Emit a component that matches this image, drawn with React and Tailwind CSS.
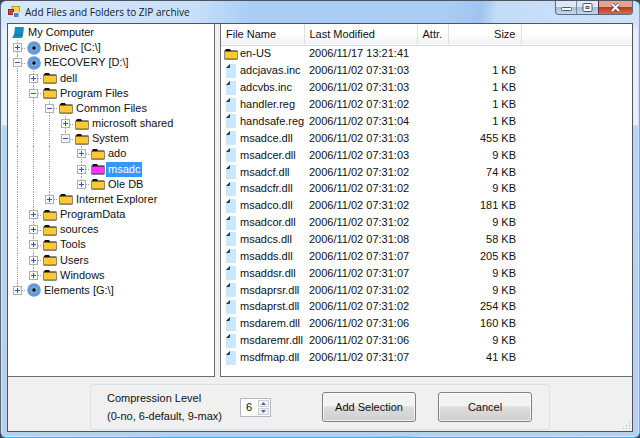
import { useState } from "react";

const tree = [
  {
    name: "My Computer",
    icon: "computer",
    children: [
      { name: "DriveC [C:\\]", icon: "drive" },
      {
        name: "RECOVERY [D:\\]",
        icon: "drive",
        children: [
          { name: "dell" },
          {
            name: "Program Files",
            children: [
              {
                name: "Common Files",
                children: [
                  { name: "microsoft shared" },
                  {
                    name: "System",
                    children: [{ name: "ado" }, { name: "msadc" }, { name: "Ole DB" }],
                  },
                ],
              },
              { name: "Internet Explorer" },
            ],
          },
          { name: "ProgramData" },
          { name: "sources" },
          { name: "Tools" },
          { name: "Users" },
          { name: "Windows" },
        ],
      },
      { name: "Elements [G:\\]", icon: "drive" },
    ],
  },
];

const files = [
  ["en-US", "2006/11/17 13:21:41", ""],
  ["adcjavas.inc", "2006/11/02 07:31:03", "1 KB"],
  ["adcvbs.inc", "2006/11/02 07:31:03", "1 KB"],
  ["handler.reg", "2006/11/02 07:31:02", "1 KB"],
  ["handsafe.reg", "2006/11/02 07:31:04", "1 KB"],
  ["msadce.dll", "2006/11/02 07:31:03", "455 KB"],
  ["msadcer.dll", "2006/11/02 07:31:03", "9 KB"],
  ["msadcf.dll", "2006/11/02 07:31:02", "74 KB"],
  ["msadcfr.dll", "2006/11/02 07:31:02", "9 KB"],
  ["msadco.dll", "2006/11/02 07:31:02", "181 KB"],
  ["msadcor.dll", "2006/11/02 07:31:02", "9 KB"],
  ["msadcs.dll", "2006/11/02 07:31:08", "58 KB"],
  ["msadds.dll", "2006/11/02 07:31:07", "205 KB"],
  ["msaddsr.dll", "2006/11/02 07:31:07", "9 KB"],
  ["msdaprsr.dll", "2006/11/02 07:31:02", "9 KB"],
  ["msdaprst.dll", "2006/11/02 07:31:02", "254 KB"],
  ["msdarem.dll", "2006/11/02 07:31:06", "160 KB"],
  ["msdaremr.dll", "2006/11/02 07:31:06", "9 KB"],
  ["msdfmap.dll", "2006/11/02 07:31:07", "41 KB"],
];

// one flat row per node; lines[i] says whether the guide in column i runs past the row
function flatten(nodes, lines = []) {
  return nodes.flatMap((node, i) => {
    const isRoot = node.icon === "computer";
    const own = isRoot ? [] : [...lines, i < nodes.length - 1];
    return [{ ...node, lines: own }, ...flatten(node.children ?? [], own)];
  });
}

const rows = flatten(tree);

function FolderIcon({ color = "#ffc933" }) {
  return (
    <svg viewBox="0 0 14 12" width="14" height="12" className="shrink-0">
      <path d="M1 2.5 2 1h4l1 1.5h6.5V11.5H.5V2.5z" fill="#111" />
      <rect x="1" y="3.5" width="12" height="7.2" fill={color} />
    </svg>
  );
}

function FileIcon() {
  return (
    <svg viewBox="0 0 14 14" width="14" height="14" className="shrink-0">
      <path d="M6 0h6v14H2V4z" fill="#c9e8fd" />
      <path d="M6 0v4H2z" fill="#10283c" />
      <path d="M6 2v2H4z" fill="#1c78b8" />
    </svg>
  );
}

function NodeIcon({ type, selected }) {
  if (type === "computer") {
    return (
      <svg viewBox="0 0 12 12" width="12" height="12">
        <path d="M3 0h8.500l-1 8H2z" fill="#0f8fc4" />
        <path d="M11.500 0 10.500 8H11l.8-7z" fill="#0b3d57" />
        <path d="M1.500 8.500h9.500L10 11H0z" fill="#1497a8" />
        <path d="M1.500 8.300h9.500" stroke="#0a3f55" strokeWidth=".8" />
      </svg>
    );
  }
  if (type === "drive") {
    return (
      <svg viewBox="0 0 14 14" width="14" height="14">
        <circle cx="7" cy="7" r="6.800" fill="#659bd2" />
        <circle cx="7" cy="7" r="3.200" fill="#78aade" />
        <circle cx="7" cy="7" r="1.700" fill="#05080c" />
      </svg>
    );
  }
  return <FolderIcon color={selected ? "#ff33ff" : undefined} />;
}

function TreeRow({ node, selected, onSelect }) {
  const last = node.lines.length - 1;
  return (
    <li className="flex items-center pl-px">
      {node.lines.map((continues, i) => (
        <span key={i} className="relative flex h-full w-4 shrink-0 items-center justify-center">
          {(continues || i === last) && (
            <span
              className={`absolute left-2 top-0 border-l border-dotted border-[#a0a0a0] ${
                continues ? "bottom-0" : "bottom-1/2"
              }`}
            />
          )}
          {i === last && (
            <>
              <span className="absolute left-2 right-0 top-1/2 border-t border-dotted border-[#a0a0a0]" />
              <button
                aria-label={node.children ? `Collapse ${node.name}` : `Expand ${node.name}`}
                className="relative ml-px flex size-[7px] items-center justify-center bg-[#f7f7f7] outline outline-[#b0b0b0]"
              >
                <svg viewBox="0 0 5 5" width="5" height="5">
                  <path d={node.children ? "M0 2.5h5" : "M0 2.5h5M2.5 0v5"} stroke="#3c5699" />
                </svg>
              </button>
            </>
          )}
        </span>
      ))}
      <span className="ml-px mr-0.5 flex w-4 shrink-0 justify-center">
        <NodeIcon type={node.icon} selected={selected} />
      </span>
      <button
        onClick={onSelect}
        className={`-ml-0.5 h-full whitespace-nowrap px-0.5 leading-[15px] ${
          selected ? "bg-[#3399ff] text-white" : ""
        }`}
      >
        {node.name}
      </button>
    </li>
  );
}

function TitleBar() {
  return (
    <header className="flex h-[22px] shrink-0 items-start justify-between pl-px">
      <div className="flex h-full items-center gap-[5px]">
        <svg viewBox="0 0 12 12" width="12" height="12">
          <rect x="4" y=".5" width="7.500" height="6" fill="#f9cf52" stroke="#c99a2c" />
          <rect x=".5" y="3.500" width="5" height="5" fill="#c8413a" stroke="#8f2a2a" />
          <rect x="5.500" y="6.500" width="5.500" height="5" fill="#4a7fd8" stroke="#e8f0ff" />
        </svg>
        <h1 className="whitespace-nowrap font-['Open_Sans',sans-serif] text-[10px] text-[#101820]">
          Add Files and Folders to ZIP archive
        </h1>
      </div>
      <div className="flex h-[14px] overflow-hidden rounded-b border border-t-0 border-[#5c6c80] bg-[#5c6c80]">
        <button
          aria-label="Minimize"
          className="flex w-[21px] items-center justify-center border-r border-[#7c8da3] bg-linear-to-b from-[#dce9f7] from-45% via-[#a9bdd3] via-50% to-[#c4d8ee]"
        >
          <svg viewBox="0 0 11 9" width="11" height="9">
            <rect x=".5" y="4.500" width="10" height="3" rx="1" fill="#fff" stroke="#535a68" />
          </svg>
        </button>
        <button
          aria-label="Maximize"
          className="flex w-[21px] items-center justify-center bg-linear-to-b from-[#dce9f7] from-45% via-[#a9bdd3] via-50% to-[#c4d8ee]"
        >
          <svg viewBox="0 0 11 9" width="11" height="9">
            <rect x="1" y=".5" width="9" height="8" rx="1" fill="#fff" stroke="#535a68" />
            <rect x="4" y="3.500" width="3" height="2" fill="#9fb4cb" stroke="#535a68" />
          </svg>
        </button>
        <button
          aria-label="Close"
          className="flex w-[34px] items-center justify-center border-l border-[#6f2d28] bg-linear-to-b from-[#e5a394] from-45% via-[#bc3a22] via-50% to-[#d9694a]"
        >
          <svg viewBox="0 0 11 9" width="11" height="9">
            <path d="m2 1 7 7M9 1 2 8" stroke="#5a4650" strokeWidth="3.500" />
            <path d="m2 1 7 7M9 1 2 8" stroke="#fff" strokeWidth="2" />
          </svg>
        </button>
      </div>
    </header>
  );
}

function FileTable() {
  return (
    <table className="h-[342px] w-full table-fixed border-collapse">
      <colgroup>
        <col className="w-[83px]" />
        <col className="w-[113px]" />
        <col className="w-[31px]" />
        <col className="w-[73px]" />
        <col />
      </colgroup>
      <thead>
        <tr className="h-[21px] border-b border-[#d5d5d5] bg-linear-to-b from-white from-50% to-[#f1f2f4] text-left *:border-r *:border-[#dfe0e1] *:p-0 *:font-normal *:whitespace-nowrap">
          <th className="pl-[5px]!">File Name</th>
          <th className="pl-[5px]!">Last Modified</th>
          <th className="pl-[5px]!">Attr.</th>
          <th className="pr-[5px]! text-right">Size</th>
          <th className="border-r-0!" />
        </tr>
      </thead>
      <tbody>
        {files.map(([name, modified, size]) => (
          <tr key={name} className="*:p-0 *:whitespace-nowrap leading-[15px]">
            <td>
              <div className="flex items-center gap-0.5 pl-[3px]">
                {size ? <FileIcon /> : <FolderIcon />}
                {name}
              </div>
            </td>
            <td className="pl-[5px]!">{modified}</td>
            <td />
            <td className="pr-[5px]! text-right">{size}</td>
            <td />
          </tr>
        ))}
      </tbody>
    </table>
  );
}

function PushButton({ children }) {
  return (
    <button className="h-[30px] w-[94px] rounded-[3px] border border-[#808080] bg-linear-to-b from-[#f3f3f3] from-45% via-[#dedede] via-50% to-[#cfcfcf] inset-ring inset-ring-white/70">
      {children}
    </button>
  );
}

function Footer() {
  const [level, setLevel] = useState(6);
  return (
    <footer className="flex h-[54px] shrink-0 items-end pb-px">
      <div className="mx-auto flex h-[46px] w-[460px] items-center rounded-sm border border-[#d7e2e6] pl-4">
        <label htmlFor="level" className="w-[133px] whitespace-nowrap leading-[18px]">
          Compression Level
          <br />
          (0-no, 6-default, 9-max)
        </label>
        <div className="flex h-[19px] w-[31px] border border-[#b4b8c4] bg-white">
          <input
            id="level"
            value={level}
            onChange={(e) => setLevel(Number(e.target.value) || 0)}
            className="w-[17px] pl-[5px] outline-none"
          />
          <div className="flex flex-1 flex-col gap-px py-px pr-px">
            <button
              aria-label="Increase"
              onClick={() => setLevel(Math.min(9, level + 1))}
              className="flex flex-1 items-center justify-center border border-[#ccd0da] bg-[#f1f2f5]"
            >
              <svg viewBox="0 0 5 3" width="5" height="3">
                <path d="M0 3 2.500 0 5 3z" fill="#4a63ac" />
              </svg>
            </button>
            <button
              aria-label="Decrease"
              onClick={() => setLevel(Math.max(0, level - 1))}
              className="flex flex-1 items-center justify-center border border-[#ccd0da] bg-[#f1f2f5]"
            >
              <svg viewBox="0 0 5 3" width="5" height="3">
                <path d="M0 0h5L2.500 3z" fill="#4a63ac" />
              </svg>
            </button>
          </div>
        </div>
        <div className="ml-[51px] flex gap-[22px]">
          <PushButton>Add Selection</PushButton>
          <PushButton>Cancel</PushButton>
        </div>
      </div>
    </footer>
  );
}

export default function App() {
  const [selected, setSelected] = useState("msadc");

  return (
    <div className="min-h-screen bg-[#3d4450] font-['Liberation_Sans',Arial,sans-serif] text-[11px] text-[#101010]">
      <div className="flex min-h-screen flex-col rounded-md border border-t-[#4f5560] border-r-[#20d0f0] border-b-[#18c4ea] border-l-[#5b6b7c] bg-[linear-gradient(100deg,#d6e8fb_0,#c9e0fa_190px,#a9cdf5_250px,#a9cdf5_440px,#a0c4ee_475px,#c3dcf8_490px,#d3e6fb_100%)] px-px pb-px">
        <div className="flex flex-1 flex-col rounded-b-sm bg-[linear-gradient(#fff0_22px,#e6f1fd_30px,#e6f1fd_124px,#b6d4f5_125px,#b6d0ee_100%)] px-[5px] pb-1">
          <TitleBar />
          <main className="relative flex flex-1 flex-col border border-[#4f555e] bg-[#f0f0f0]">
            <div className="flex flex-1 gap-[5px]">
              <section className="w-[207px] shrink-0 border-r border-b border-[#6d6d6d] bg-white pt-px">
                <ul className="grid h-[273px] auto-rows-fr">
                  {rows.map((node) => (
                    <TreeRow
                      key={node.name}
                      node={node}
                      selected={node.name === selected}
                      onSelect={() => setSelected(node.name)}
                    />
                  ))}
                </ul>
              </section>
              <section className="min-w-0 flex-1 border-b border-l border-[#6d6d6d] bg-white">
                <FileTable />
              </section>
            </div>
            <Footer />
            <svg viewBox="0 0 8 8" width="8" height="8" className="absolute bottom-px right-px">
              <path
                d="M6 0h1v1H6zM3 3h1v1H3zM6 3h1v1H6zM0 6h1v1H0zM3 6h1v1H3zM6 6h1v1H6z"
                fill="#b0b0b0"
              />
            </svg>
          </main>
        </div>
      </div>
    </div>
  );
}
